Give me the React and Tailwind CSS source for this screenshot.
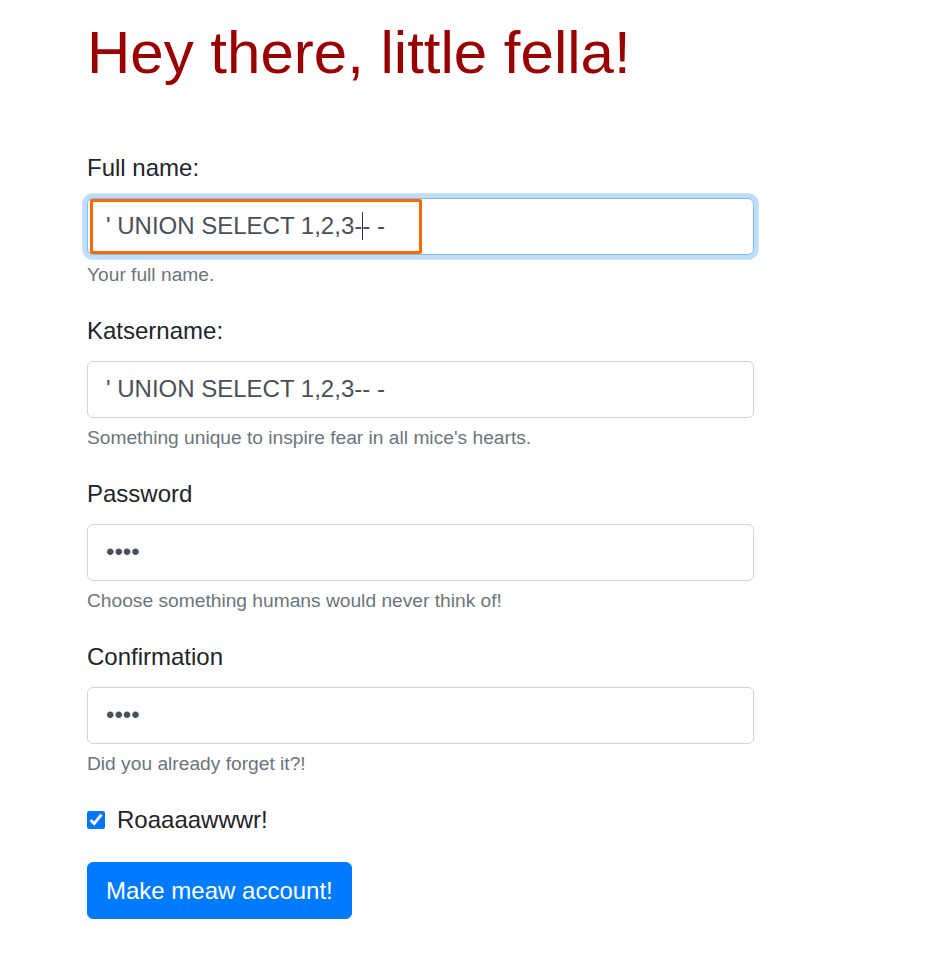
import { useState } from 'react';

const fieldBox = "block w-full h-[56.2px] px-[18px] py-[9px] text-[24px] leading-[36px] text-[#495057] bg-white border border-[#ced4da] rounded-[6px] outline-none";

function Field({ label, help, children }) {
    return (
        <div className="mb-[24px]">
            <label className="block mb-[12px] text-[24px] leading-[36px] text-[#212529]">{label}</label>
            {children}
            <small className="block mt-[6px] text-[19.2px] leading-[28.8px] text-[#6c757d]">{help}</small>
        </div>
    );
}

export default function App() {
    const [roar, setRoar] = useState(true);
    const sqli = "' UNION SELECT 1,2,3-- -";

    return (
        <div className="min-h-screen bg-white" style={{ fontFamily: '"Liberation Sans", Arial, sans-serif' }}>
            <div className="ml-[87px] w-[667px] pt-[17px]">
                <h1 className="text-[60px] leading-[72px] text-[#990000] mb-[61px]">Hey there, little fella!</h1>

                <form onSubmit={e => e.preventDefault()}>
                    <Field label="Full name:" help="Your full name.">
                        <div className="relative">
                            <div className="flex items-center w-full h-[56.6px] px-[18px] text-[24px] leading-[36px] text-[#495057] bg-white border border-[#80bdff] rounded-[6px] shadow-[0_0_0_4.8px_rgba(0,123,255,0.25)] whitespace-pre">
                                <span>{"' UNION SELECT 1,2,3-"}</span>
                                <span className="inline-block w-px h-[28px] bg-[#333] -mx-[0.5px]" />
                                <span>{"- -"}</span>
                            </div>
                            <div className="absolute left-[3px] top-[1px] w-[332px] h-[55px] border-[3px] border-[#ff6a00] rounded-[2px] pointer-events-none" />
                        </div>
                    </Field>

                    <Field label="Katsername:" help="Something unique to inspire fear in all mice's hearts.">
                        <input type="text" readOnly value={sqli} className={fieldBox} />
                    </Field>

                    <Field label="Password" help="Choose something humans would never think of!">
                        <input type="password" readOnly value="meow" className={fieldBox} />
                    </Field>

                    <Field label="Confirmation" help="Did you already forget it?!">
                        <input type="password" readOnly value="meow" className={fieldBox} />
                    </Field>

                    <div className="relative pl-[30px] mb-[24px]">
                        <input
                            id="roar"
                            type="checkbox"
                            checked={roar}
                            onChange={() => setRoar(!roar)}
                            className="absolute left-0 top-[9px] w-[18px] h-[18px] m-0"
                        />
                        <label htmlFor="roar" className="text-[24px] leading-[36px] text-[#212529]">Roaaaawwwr!</label>
                    </div>

                    <button type="submit" className="h-[56.4px] px-[18px] py-[9px] text-[24px] leading-[36px] text-white bg-[#007bff] border border-[#007bff] rounded-[6px]">
                        Make meaw account!
                    </button>
                </form>
            </div>
        </div>
    );
}
